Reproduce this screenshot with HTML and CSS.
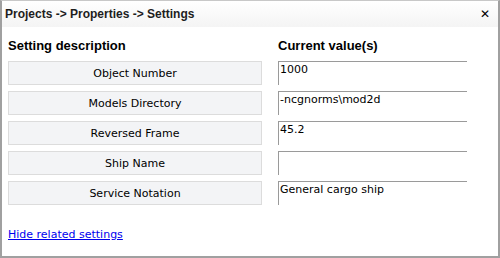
FILE: index.html
```html
<!DOCTYPE html>
<html lang="en">
<head>
  <meta charset="UTF-8">
  <title>Settings</title>
  <link rel="stylesheet" href="styles.css">
</head>
<body>
  <div class="dialog">
    <div class="titlebar">
      <span class="title">Projects -&gt; Properties -&gt; Settings</span>
      <span class="close">&#x2715;</span>
    </div>

    <div class="content">
      <div class="grid">
        <div class="head">Setting description</div>
        <div class="head">Current value(s)</div>

        <button class="name">Object Number</button>
        <div class="value">1000</div>

        <button class="name">Models Directory</button>
        <div class="value">-ncgnorms\mod2d</div>

        <button class="name">Reversed Frame</button>
        <div class="value">45.2</div>

        <button class="name">Ship Name</button>
        <div class="value"></div>

        <button class="name">Service Notation</button>
        <div class="value">General cargo ship</div>
      </div>

      <a href="#" class="toggle">Hide related settings</a>
    </div>
  </div>
</body>
</html>
```

FILE: styles.css
```css
* { box-sizing: border-box; }
html, body {
  margin: 0;
  height: 100%;
}
body {
  font-family: 'DejaVu Sans', sans-serif;
  font-size: 11px;
  color: #000;
  background: #fff;
}
.dialog {
  height: 258px;
  border: 2px solid #a0a0a0;
  border-top: 1px solid #c8c8c8;
  background: #fff;
}
.titlebar {
  display: flex;
  justify-content: space-between;
  align-items: center;
  height: 26px;
  padding: 0 8px 0 3px;
  background: linear-gradient(to bottom, #ffffff, #f4f4f4);
}
.title {
  font-family: 'Liberation Sans', sans-serif;
  font-size: 12px;
  font-weight: bold;
  color: #1e1e1e;
}
.close {
  font-size: 12px;
  font-weight: bold;
}
.content {
  padding: 10px 6px 0 6px;
}
.grid {
  display: grid;
  grid-template-columns: 254px 189px;
  column-gap: 16px;
  row-gap: 6px;
}
.head {
  font-family: 'Liberation Sans', sans-serif;
  font-weight: bold;
  font-size: 13px;
  height: 18px;
  line-height: 18px;
}
.name {
  height: 24px;
  margin: 0;
  padding: 0;
  font: inherit;
  color: #000;
  background: #f3f4f6;
  border: 1px solid #dcdcdc;
  cursor: pointer;
}
.value {
  height: 24px;
  padding: 1px 0 0 1px;
  border-top: 1px solid #9a9a9a;
  border-left: 1px solid #9a9a9a;
}
.toggle {
  display: inline-block;
  margin-top: 23px;
  color: #0000ee;
}
```
